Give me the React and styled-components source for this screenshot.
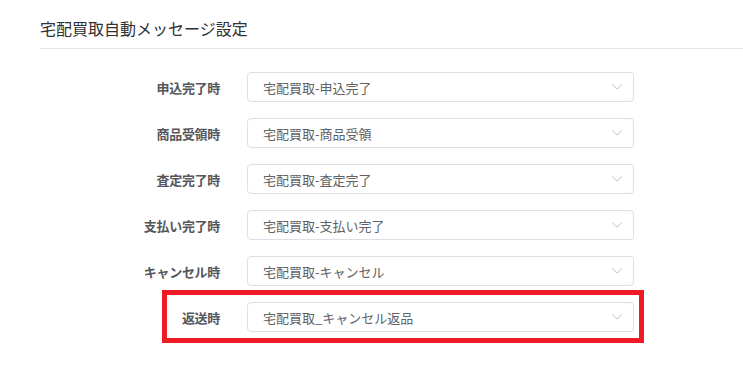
import React from 'react'
import styled, { createGlobalStyle } from 'styled-components'

const GlobalStyle = createGlobalStyle`
  body {
    margin: 0;
    background: #fff;
    font-family: "Noto Sans CJK JP", "Noto Sans", sans-serif;
  }
`

const Page = styled.div`
  padding: 0 0 0 40px;
`

const Title = styled.h2`
  margin: 0;
  padding: 18px 0 10px;
  font-size: 16px;
  font-weight: 400;
  line-height: 20px;
  color: #303133;
  border-bottom: 1px solid #e6e6e6;
`

const Form = styled.div`
  padding-top: 23px;
`

const Row = styled.div`
  position: relative;
  display: flex;
  align-items: center;
  margin-bottom: 16px;
`

const Label = styled.label`
  width: 180px;
  padding-right: 27px;
  text-align: right;
  font-size: 13px;
  font-weight: 700;
  letter-spacing: -0.3px;
  color: #55575c;
`

const Select = styled.div`
  box-sizing: border-box;
  width: 387px;
  height: 30px;
  display: flex;
  align-items: center;
  justify-content: space-between;
  padding: 0 10px 0 15px;
  border: 1px solid #dcdfe6;
  border-radius: 4px;
  font-size: 13px;
  color: #606266;
`

const Highlight = styled.div`
  position: absolute;
  left: 122px;
  top: -12px;
  width: 482px;
  height: 53px;
  box-sizing: border-box;
  border: 5px solid #ed1c24;
  pointer-events: none;
`

const Chevron = () => (
  <svg width="12" height="8" viewBox="0 0 12 8" fill="none">
    <path d="M1 1.5 L6 6 L11 1.5" stroke="#c0c4cc" strokeWidth="1" />
  </svg>
)

const rows = [
  ['申込完了時', '宅配買取-申込完了'],
  ['商品受領時', '宅配買取-商品受領'],
  ['査定完了時', '宅配買取-査定完了'],
  ['支払い完了時', '宅配買取-支払い完了'],
  ['キャンセル時', '宅配買取-キャンセル'],
  ['返送時', '宅配買取_キャンセル返品', true]
]

const App = () => (
  <Page>
    <GlobalStyle />
    <Title>宅配買取自動メッセージ設定</Title>
    <Form>
      {rows.map(([label, value, marked]) => (
        <Row key={label}>
          <Label>{label}</Label>
          <Select>
            <span>{value}</span>
            <Chevron />
          </Select>
          {marked && <Highlight />}
        </Row>
      ))}
    </Form>
  </Page>
)

export default App
